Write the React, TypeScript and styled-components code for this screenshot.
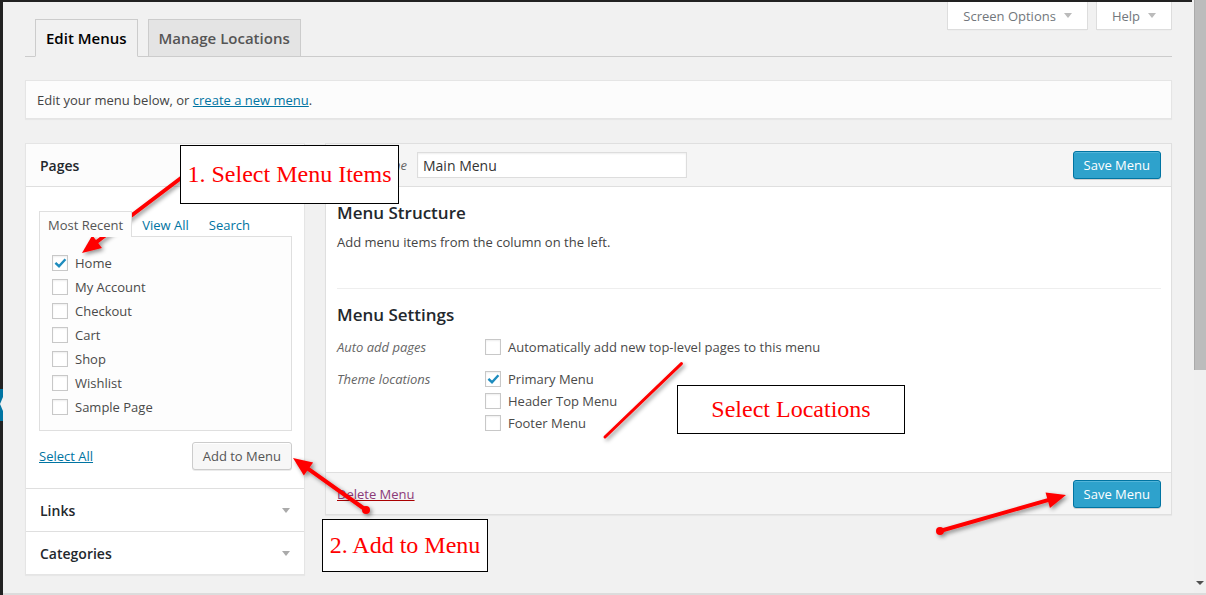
import React from 'react';
import styled, { createGlobalStyle } from 'styled-components';

const Global = createGlobalStyle`
  html, body { margin: 0; padding: 0; }
  body {
    font-family: "Open Sans", "Noto Sans", sans-serif;
    font-size: 13px;
    color: #444;
    background: #f1f1f1;
    overflow: hidden;
  }
  * { box-sizing: border-box; }
`;

const Screen = styled.div`
  position: relative;
  display: flex;
  width: 1206px;
  height: 595px;
  overflow: hidden;
  background: #f1f1f1;
`;

const AdminEdge = styled.div`
  position: relative;
  width: 3px;
  flex: none;
  background: #222;
`;

const CurrentMarker = styled.div`
  position: absolute;
  left: 0;
  top: 389px;
  width: 3px;
  height: 32px;
  background: #0074a2;
  &::after {
    content: '';
    position: absolute;
    right: 0;
    top: 8px;
    border-style: solid;
    border-width: 7px 3px 7px 0;
    border-color: transparent #f1f1f1 transparent transparent;
  }
`;

const Main = styled.div`
  flex: 1;
  min-width: 0;
  display: flex;
  flex-direction: column;
`;

const AdminBarEdge = styled.div`
  flex: none;
  height: 2px;
  margin-right: 2px;
  background: #222;
`;

const Wrap = styled.div`
  flex: 1;
  padding: 0 22px;
`;

const BottomEdge = styled.div`
  flex: none;
  height: 2px;
  background: #dcdcdc;
`;

const Header = styled.div`
  display: flex;
  height: 55px;
  border-bottom: 1px solid #ccc;
`;

const NavTabs = styled.div`
  display: flex;
  gap: 10px;
  padding-left: 10px;
  align-self: flex-end;
  margin-bottom: -1px;
`;

const NavTab = styled.div<{ $active?: boolean }>`
  height: 38px;
  padding: 0 10px;
  display: flex;
  align-items: center;
  border: 1px solid #ccc;
  border-bottom-color: ${p => (p.$active ? '#f1f1f1' : '#ccc')};
  background: ${p => (p.$active ? '#f1f1f1' : '#e4e4e4')};
  color: ${p => (p.$active ? '#000' : '#555')};
  font-size: 15px;
  font-weight: 600;
  line-height: 1;
`;

const MetaLinks = styled.div`
  margin-left: auto;
  align-self: flex-start;
  display: flex;
  gap: 8px;
`;

const MetaLink = styled.div`
  height: 28px;
  padding: 0 15px;
  display: flex;
  align-items: center;
  gap: 8px;
  background: #fff;
  border: 1px solid #ddd;
  border-top: none;
  box-shadow: 0 1px 1px -1px rgba(0, 0, 0, 0.1);
  color: #72777c;
  font-size: 13px;
`;

const SmallTriangle = styled.span<{ $color?: string }>`
  display: inline-block;
  width: 0;
  height: 0;
  border-left: 4px solid transparent;
  border-right: 4px solid transparent;
  border-top: 5px solid ${p => p.$color || '#bbb'};
`;

const Notice = styled.div`
  margin-top: 23px;
  height: 39px;
  padding: 0 11px;
  display: flex;
  align-items: center;
  background: #fcfcfc;
  border: 1px solid #e5e5e5;
  box-shadow: 0 1px 1px rgba(0, 0, 0, 0.04);
  color: #444;
`;

const Link = styled.a<{ $danger?: boolean }>`
  color: ${p => (p.$danger ? '#8c3a78' : '#0074a2')};
  text-decoration: underline;
  text-decoration-color: ${p => (p.$danger ? '#a00' : 'currentColor')};
  cursor: pointer;
`;

const Columns = styled.div`
  margin-top: 24px;
  display: flex;
  gap: 20px;
  align-items: flex-start;
`;

const SidePanel = styled.div`
  width: 280px;
  flex: none;
  background: #fff;
  border: 1px solid #e5e5e5;
  box-shadow: 0 1px 1px rgba(0, 0, 0, 0.04);
`;

const AccordionTitle = styled.div<{ $open?: boolean }>`
  height: 43px;
  padding: 0 14px;
  display: flex;
  align-items: center;
  justify-content: space-between;
  font-size: 14px;
  font-weight: 600;
  color: #23282d;
  background: ${p => (p.$open ? '#fcfcfc' : '#fff')};
  border-top: ${p => (p.$open ? 'none' : '1px solid #dfdfdf')};
  border-bottom: ${p => (p.$open ? '1px solid #dfdfdf' : 'none')};
`;

const AccordionBody = styled.div`
  padding: 24px 12px 18px 13px;
`;

const PageTabs = styled.div`
  display: flex;
  height: 25px;
  align-items: flex-start;
`;

const PageTab = styled.div<{ $active?: boolean }>`
  position: relative;
  z-index: 1;
  height: 26px;
  padding: 0 8px;
  display: flex;
  align-items: center;
  border: 1px solid ${p => (p.$active ? '#dfdfdf' : 'transparent')};
  border-bottom: none;
  background: ${p => (p.$active ? '#fdfdfd' : 'transparent')};
  color: ${p => (p.$active ? '#555' : '#0074a2')};
  margin-right: ${p => (p.$active ? '1px' : '2px')};
  line-height: 24px;
`;

const TabBox = styled.div`
  height: 195px;
  padding: 14px 12px 11px;
  background: #fdfdfd;
  border: 1px solid #dfdfdf;
`;

const CheckRow = styled.label<{ $h?: number }>`
  display: flex;
  align-items: center;
  gap: 7px;
  height: ${p => p.$h ?? 24}px;
  color: #4a4a4a;
`;

const Box = styled.span`
  width: 16px;
  height: 16px;
  flex: none;
  display: inline-flex;
  align-items: center;
  justify-content: center;
  background: #fff;
  border: 1px solid #c8c8c8;
  box-shadow: inset 0 1px 2px rgba(0, 0, 0, 0.07);
`;

const Actions = styled.div`
  margin-top: 11px;
  height: 28px;
  display: flex;
  align-items: center;
  justify-content: space-between;
`;

const Button = styled.button`
  height: 28px;
  padding: 0 10px;
  font-family: inherit;
  font-size: 13px;
  color: #555;
  background: #f7f7f7;
  border: 1px solid #ccc;
  border-radius: 3px;
  box-shadow: inset 0 1px 0 #fff, 0 1px 0 rgba(0, 0, 0, 0.08);
`;

const PrimaryButton = styled(Button)`
  color: #fff;
  background: #2ea2cc;
  border-color: #0074a2;
  box-shadow: inset 0 1px 0 rgba(120, 200, 230, 0.5), 0 1px 0 rgba(0, 0, 0, 0.15);
`;

const MenuPanel = styled.div`
  flex: 1;
  background: #fff;
  border: 1px solid #dfdfdf;
  box-shadow: 0 1px 1px rgba(0, 0, 0, 0.04);
`;

const MenuHeader = styled.div`
  height: 43px;
  padding: 0 10px 0 11px;
  display: flex;
  align-items: center;
  background: #f5f5f5;
  border-bottom: 1px solid #dfdfdf;
`;

const NameLabel = styled.span`
  width: 80px;
  font-style: italic;
  color: #666;
`;

const NameInput = styled.div`
  width: 270px;
  height: 26px;
  padding: 0 5px;
  display: flex;
  align-items: center;
  background: #fff;
  border: 1px solid #ddd;
  box-shadow: inset 0 1px 2px rgba(0, 0, 0, 0.07);
  font-size: 14px;
  color: #333;
`;

const HeaderSave = styled(PrimaryButton)`
  margin-left: auto;
`;

const MenuBody = styled.div`
  display: flow-root;
  height: 285px;
  padding: 0 10px 0 11px;
`;

const SectionTitle = styled.h3`
  margin: 14px 0 8px;
  font-size: 17px;
  font-weight: 600;
  line-height: 24px;
  color: #23282d;
`;

const Hint = styled.p`
  margin: 0;
  line-height: 19px;
  color: #444;
`;

const Divider = styled.div`
  margin-top: 36px;
  border-top: 1px solid #eee;
`;

const SettingsGrid = styled.div`
  margin-top: 9px;
  display: grid;
  grid-template-columns: 148px 1fr;
  row-gap: 10px;
`;

const SettingLabel = styled.div`
  font-style: italic;
  color: #666;
  line-height: 22px;
`;

const MenuFooter = styled.div`
  height: 42px;
  padding: 0 10px 0 11px;
  display: flex;
  align-items: center;
  justify-content: space-between;
  background: #f5f5f5;
  border-top: 1px solid #dfdfdf;
`;

const Scrollbar = styled.div`
  width: 12px;
  flex: none;
  display: flex;
  flex-direction: column;
  align-items: center;
  background: #f0f0f0;
  border-bottom: 2px solid #dcdcdc;
`;

const ScrollThumb = styled.div`
  width: 12px;
  height: 370px;
  background: #bcbcbc;
  border-left: 1px solid #aaa;
`;

const ScrollDown = styled.span`
  margin-top: auto;
  margin-bottom: 8px;
  border-left: 4px solid transparent;
  border-right: 4px solid transparent;
  border-top: 4px solid #505050;
`;

const ArrowLayer = styled.svg`
  position: absolute;
  left: 0;
  top: 0;
  pointer-events: none;
`;

const Callout = styled.div`
  position: absolute;
  display: flex;
  align-items: center;
  justify-content: center;
  background: #fff;
  border: 1px solid #000;
  font-family: "Liberation Serif", "Times New Roman", serif;
  font-size: 24px;
  color: #f00;
  white-space: nowrap;
`;

function Checkbox({ checked }: { checked?: boolean }) {
  return (
    <Box>
      {checked && (
        <svg width="14" height="14" viewBox="0 0 14 14">
          <path d="M2.4 6.8 L6 10.2 L12.4 3.2" fill="none" stroke="#1e8cbe" strokeWidth="2.4" />
        </svg>
      )}
    </Box>
  );
}

const pages = ['Home', 'My Account', 'Checkout', 'Cart', 'Shop', 'Wishlist', 'Sample Page'];
const locations: [string, boolean][] = [
  ['Primary Menu', true],
  ['Header Top Menu', false],
  ['Footer Menu', false],
];

type Arrow = { x1: number; y1: number; x2: number; y2: number; head?: boolean; dot?: boolean; w: number };
const arrows: Arrow[] = [
  { x1: 181, y1: 178, x2: 82, y2: 253, head: true, w: 4 },
  { x1: 366, y1: 510, x2: 293, y2: 458, head: true, dot: true, w: 4 },
  { x1: 605, y1: 437, x2: 680, y2: 365, w: 3 },
  { x1: 940, y1: 531, x2: 1066, y2: 495, head: true, dot: true, w: 4 },
];

function ArrowShape({ a }: { a: Arrow }) {
  const dx = a.x2 - a.x1;
  const dy = a.y2 - a.y1;
  const len = Math.hypot(dx, dy);
  const ux = dx / len;
  const uy = dy / len;
  const hl = 19;
  const hw = 8;
  const bx = a.head ? a.x2 - ux * hl : a.x2;
  const by = a.head ? a.y2 - uy * hl : a.y2;
  const nx = -uy;
  const ny = ux;
  return (
    <g>
      <line x1={a.x1} y1={a.y1} x2={bx + ux * 2} y2={by + uy * 2} stroke="#f00" strokeWidth={a.w} strokeLinecap="round" />
      {a.head && (
        <polygon
          fill="#f00"
          points={`${a.x2},${a.y2} ${bx + nx * hw},${by + ny * hw} ${bx - nx * hw},${by - ny * hw}`}
        />
      )}
      {a.dot && <circle cx={a.x1} cy={a.y1} r={4} fill="#f00" />}
    </g>
  );
}

export default function App() {
  return (
    <>
      <Global />
      <Screen>
        <AdminEdge>
          <CurrentMarker />
        </AdminEdge>
        <Main>
          <AdminBarEdge />
          <Wrap>
            <Header>
              <NavTabs>
                <NavTab $active>Edit Menus</NavTab>
                <NavTab>Manage Locations</NavTab>
              </NavTabs>
              <MetaLinks>
                <MetaLink>
                  Screen Options <SmallTriangle />
                </MetaLink>
                <MetaLink>
                  Help <SmallTriangle />
                </MetaLink>
              </MetaLinks>
            </Header>
            <Notice>
              <span>
                Edit your menu below, or <Link>create a new menu</Link>.
              </span>
            </Notice>
            <Columns>
              <SidePanel>
                <AccordionTitle $open>Pages</AccordionTitle>
                <AccordionBody>
                  <PageTabs>
                    <PageTab $active>Most Recent</PageTab>
                    <PageTab>View All</PageTab>
                    <PageTab>Search</PageTab>
                  </PageTabs>
                  <TabBox>
                    {pages.map((p, i) => (
                      <CheckRow key={p}>
                        <Checkbox checked={i === 0} />
                        {p}
                      </CheckRow>
                    ))}
                  </TabBox>
                  <Actions>
                    <Link>Select All</Link>
                    <Button>Add to Menu</Button>
                  </Actions>
                </AccordionBody>
                <AccordionTitle>
                  Links <SmallTriangle $color="#aaa" />
                </AccordionTitle>
                <AccordionTitle>
                  Categories <SmallTriangle $color="#aaa" />
                </AccordionTitle>
              </SidePanel>
              <MenuPanel>
                <MenuHeader>
                  <NameLabel>Menu Name</NameLabel>
                  <NameInput>Main Menu</NameInput>
                  <HeaderSave>Save Menu</HeaderSave>
                </MenuHeader>
                <MenuBody>
                  <SectionTitle>Menu Structure</SectionTitle>
                  <Hint>Add menu items from the column on the left.</Hint>
                  <Divider />
                  <SectionTitle>Menu Settings</SectionTitle>
                  <SettingsGrid>
                    <SettingLabel>Auto add pages</SettingLabel>
                    <CheckRow $h={22}>
                      <Checkbox />
                      Automatically add new top-level pages to this menu
                    </CheckRow>
                    <SettingLabel>Theme locations</SettingLabel>
                    <div>
                      {locations.map(([name, on]) => (
                        <CheckRow key={name} $h={22}>
                          <Checkbox checked={on} />
                          {name}
                        </CheckRow>
                      ))}
                    </div>
                  </SettingsGrid>
                </MenuBody>
                <MenuFooter>
                  <Link $danger>Delete Menu</Link>
                  <PrimaryButton>Save Menu</PrimaryButton>
                </MenuFooter>
              </MenuPanel>
            </Columns>
          </Wrap>
          <BottomEdge />
        </Main>
        <Scrollbar>
          <ScrollThumb />
          <ScrollDown />
        </Scrollbar>

        <ArrowLayer width="1206" height="595" viewBox="0 0 1206 595">
          <defs>
            <filter id="arrowShadow" filterUnits="userSpaceOnUse" x="0" y="0" width="1206" height="595">
              <feDropShadow dx="2" dy="2" stdDeviation="2" floodColor="#000" floodOpacity="0.45" />
            </filter>
          </defs>
          <g filter="url(#arrowShadow)">
            {arrows.map((a, i) => (
              <ArrowShape key={i} a={a} />
            ))}
          </g>
        </ArrowLayer>
        <Callout style={{ left: 180, top: 145, width: 219, height: 59 }}>1. Select Menu Items</Callout>
        <Callout style={{ left: 322, top: 519, width: 166, height: 53 }}>2. Add to Menu</Callout>
        <Callout style={{ left: 677, top: 385, width: 228, height: 49 }}>Select Locations</Callout>
      </Screen>
    </>
  );
}
